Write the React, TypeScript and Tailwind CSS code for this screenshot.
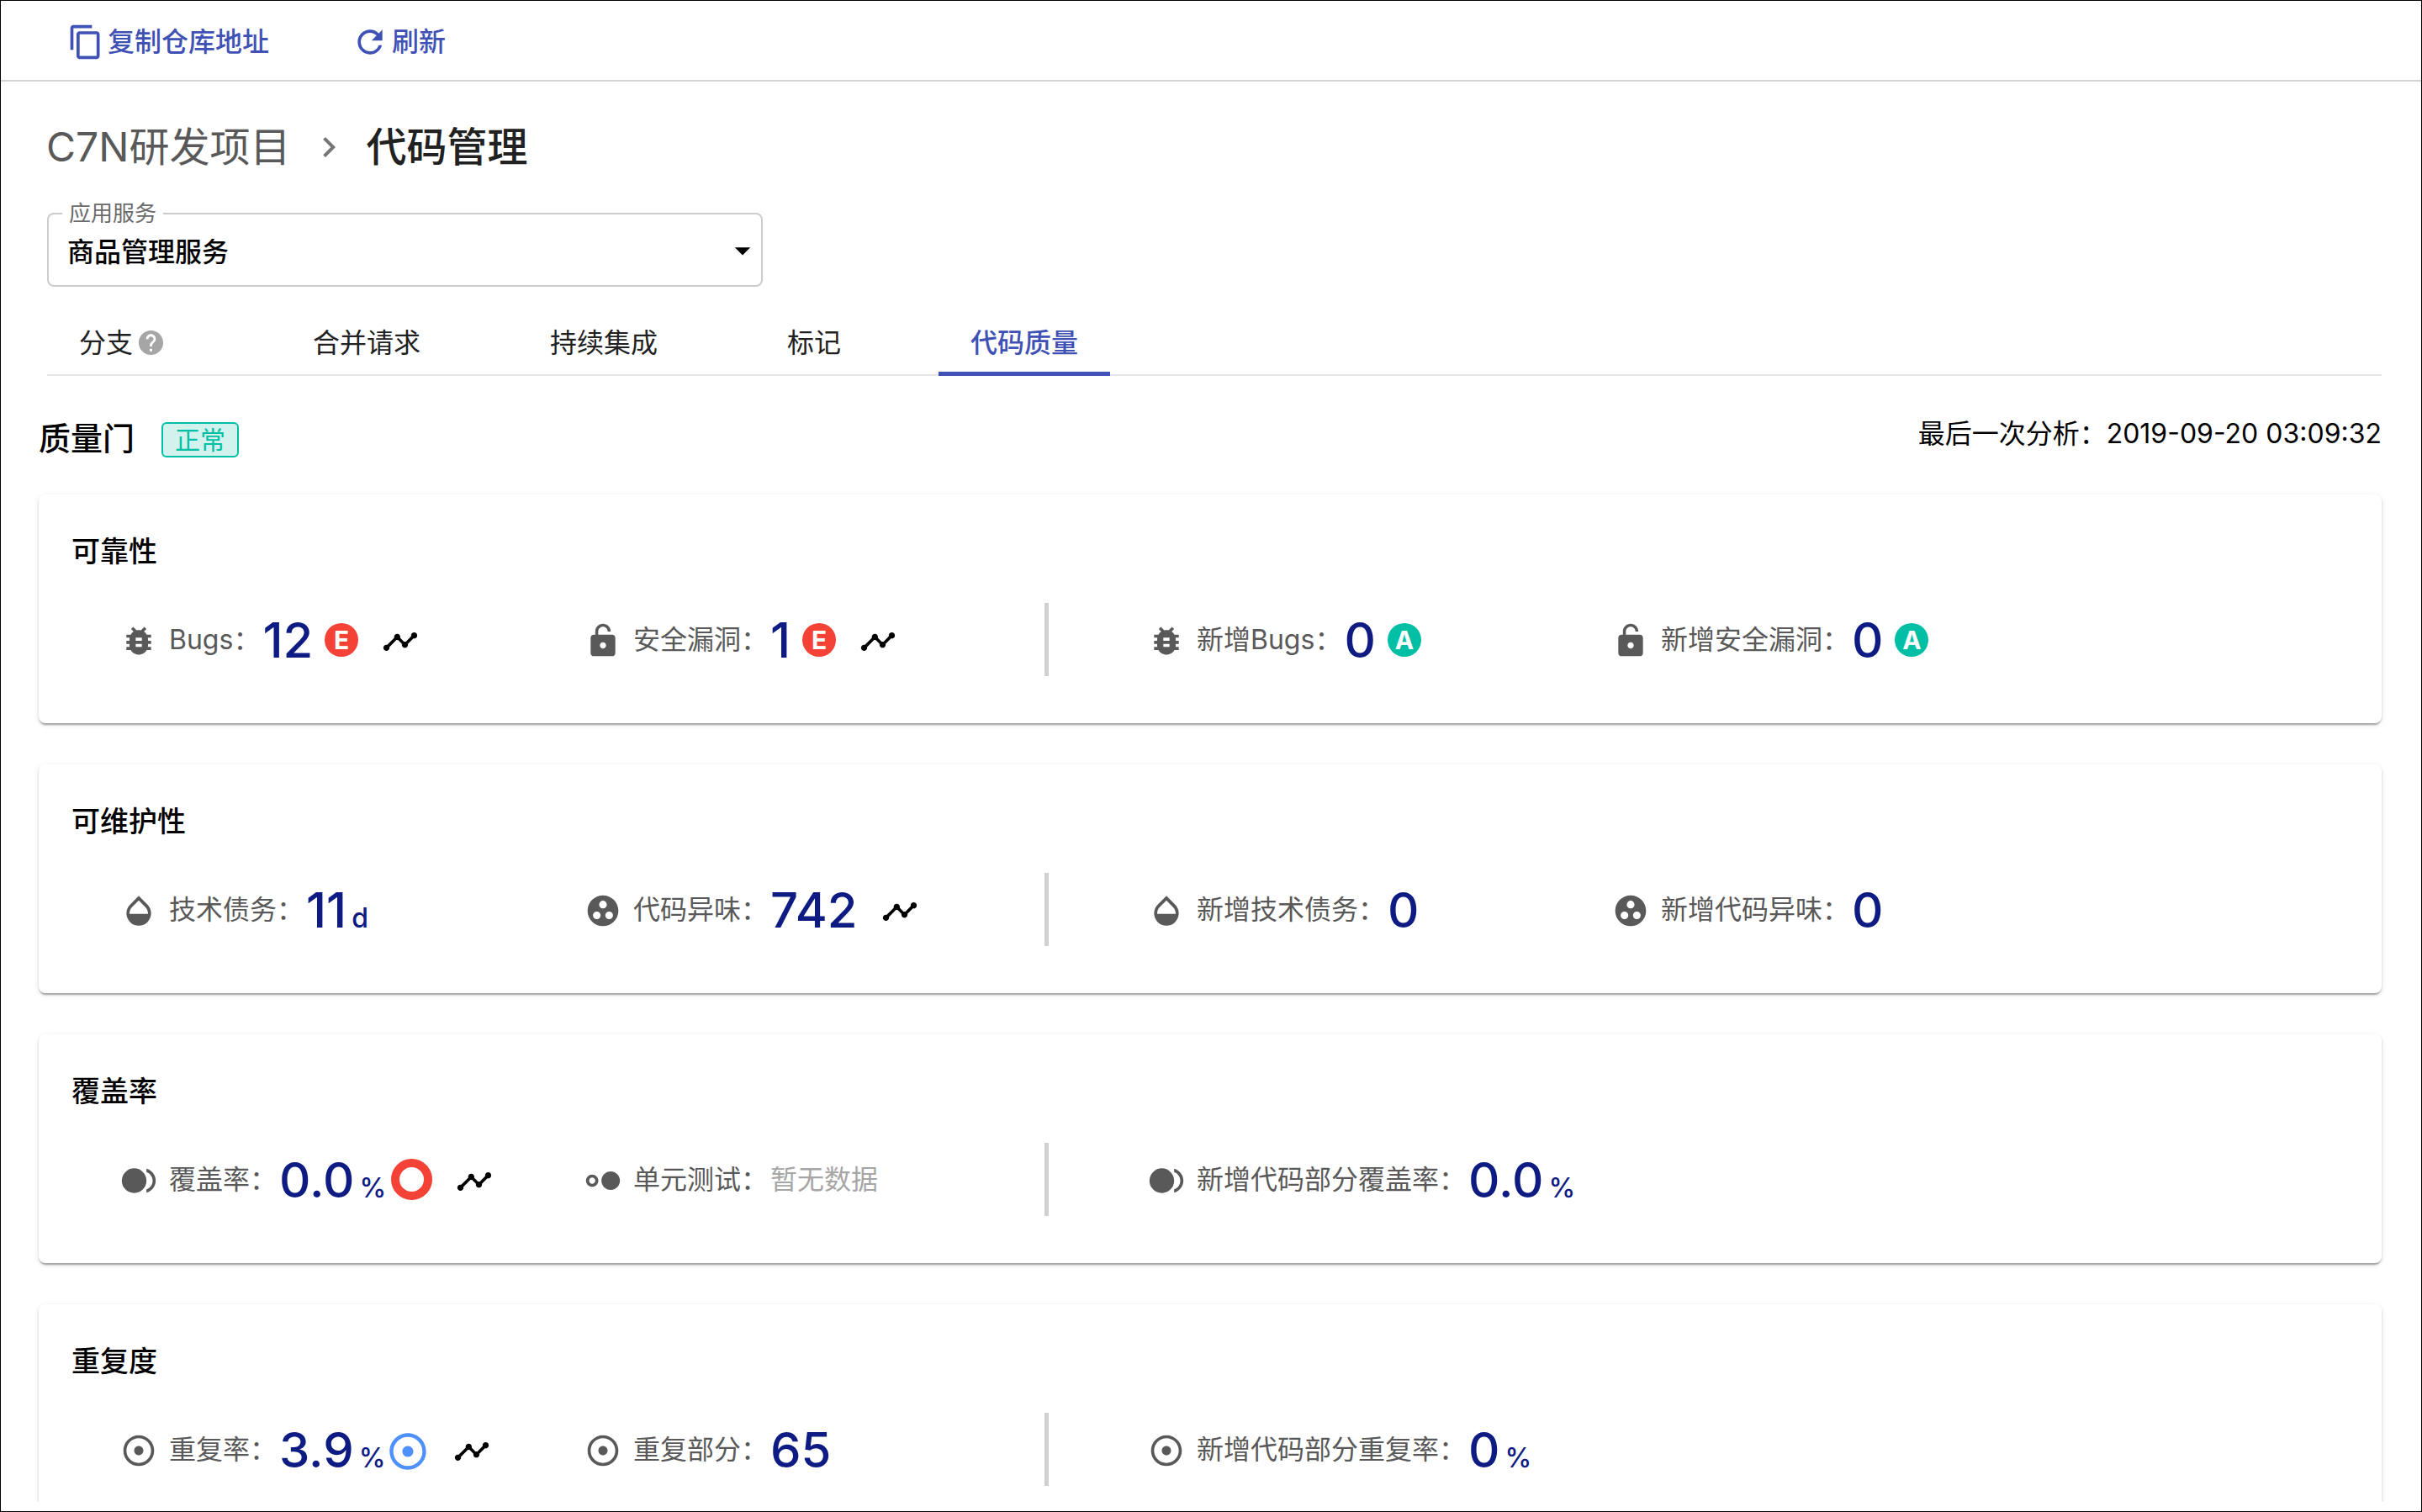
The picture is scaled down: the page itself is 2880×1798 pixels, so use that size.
import type { ReactNode } from 'react';
import {
  MdAdjust,
  MdArrowDropDown,
  MdBugReport,
  MdContentCopy,
  MdGroupWork,
  MdHdrStrong,
  MdHelp,
  MdKeyboardArrowRight,
  MdOpacity,
  MdRefresh,
  MdTimeline,
} from 'react-icons/md';

const ICON = 'size-11 shrink-0';

function UnlockIcon() {
  return (
    <svg viewBox="0 0 24 24" fill="currentColor" className={ICON} aria-hidden="true">
      <path d="M18 8H8.9V6c0-1.71 1.39-3.1 3.1-3.1s3.1 1.39 3.1 3.1H17c0-2.76-2.24-5-5-5S7 3.24 7 6v2H6c-1.1 0-2 .9-2 2v10c0 1.1.9 2 2 2h12c1.1 0 2-.9 2-2V10c0-1.1-.9-2-2-2zm-6 9c-1.1 0-2-.9-2-2s.9-2 2-2 2 .9 2 2-.9 2-2 2z" />
    </svg>
  );
}

function CoverageIcon() {
  return (
    <svg viewBox="0 0 24 24" fill="currentColor" className={ICON} aria-hidden="true">
      <circle cx="9" cy="12" r="8" />
      <path d="M21 12c0-2.61-1.67-4.83-4-5.65V4.26c3.45.89 6 4.01 6 7.74s-2.55 6.85-6 7.74v-2.09c2.33-.82 4-3.04 4-5.65z" />
    </svg>
  );
}

function Grade({ value }: { value: 'A' | 'E' }) {
  const color = value === 'A' ? 'bg-[#00bfa5]' : 'bg-[#f44336]';
  return (
    <span
      className={`ml-3.5 flex size-10 items-center justify-center rounded-full text-[30px] leading-none font-bold text-white ${color}`}
    >
      {value}
    </span>
  );
}

function Trend() {
  return (
    <button type="button" aria-label="趋势" className="mt-1 ml-7 text-black">
      <MdTimeline className={ICON} />
    </button>
  );
}

type MetricProps = {
  icon: ReactNode;
  label: string;
  value?: string;
  unit?: string;
  empty?: string;
  children?: ReactNode;
};

function Metric({ icon, label, value, unit, empty, children }: MetricProps) {
  return (
    <div className="flex h-[87px] w-[508px] items-center whitespace-nowrap">
      <span className="mt-0.5 text-[#595959]">{icon}</span>
      <span className="ml-3.5 text-[32px] text-[#595959]">{label}：</span>
      {value && (
        <span className="ml-[3px] flex items-baseline font-medium text-[#0d1b82]">
          <span className="text-[58px] leading-none">{value}</span>
          {unit && <span className="ml-1.5 text-[32px] leading-none">{unit}</span>}
        </span>
      )}
      {empty && <span className="ml-[3px] text-[32px] text-[#a6a6a6]">{empty}</span>}
      {children}
    </div>
  );
}

function Card({ title, total, fresh }: { title: string; total: ReactNode; fresh: ReactNode }) {
  return (
    <section className="h-[272px] shrink-0 rounded-lg bg-white shadow-[0_4px_2px_-2px_rgba(0,0,0,0.2),0_2px_2px_0_rgba(0,0,0,0.14),0_2px_6px_0_rgba(0,0,0,0.12)]">
      <h3 className="pt-[43px] pl-[39px] text-[34px] leading-[50px] font-medium text-black">{title}</h3>
      <div className="mt-9 flex items-center pl-[97px]">
        <div className="flex gap-11">{total}</div>
        <div className="ml-[39px] h-[87px] w-[5px] bg-[#d0d0d0]" />
        <div className="ml-[118px] flex gap-11">{fresh}</div>
      </div>
    </section>
  );
}

const TABS = ['分支', '合并请求', '持续集成', '标记', '代码质量'];

export default function App() {
  return (
    <div className="flex h-screen flex-col overflow-hidden border border-black bg-white font-['Inter','Noto_Sans_CJK_SC',sans-serif] text-black">
      <header className="flex h-24 shrink-0 items-center border-b-2 border-[#d3d3d3] pt-1 pl-[79px] text-[32px] font-medium text-[#3f51b5]">
        <button type="button" className="flex items-center gap-1">
          <MdContentCopy className={ICON} />
          复制仓库地址
        </button>
        <button type="button" className="ml-[98px] flex items-center gap-1">
          <MdRefresh className={ICON} />
          刷新
        </button>
      </header>

      <nav aria-label="面包屑" className="mt-11 ml-[54px] flex h-[68px] shrink-0 items-center text-[48px]">
        <a href="#project" className="text-[#595959]">C7N研发项目</a>
        <MdKeyboardArrowRight className="mr-5 ml-[22px] size-12 text-[#757575]" />
        <h1 className="font-medium text-[#212121]">代码管理</h1>
      </nav>

      <fieldset className="mt-[27px] ml-[55px] flex h-[105px] w-[851px] shrink-0 flex-col rounded-lg border-2 border-[#ccc]">
        <legend className="ml-4 px-2 text-[26px] leading-9 text-[#6b6b6b]">
          <label htmlFor="service">应用服务</label>
        </legend>
        <div className="relative grow">
          <select id="service" className="h-full w-full appearance-none bg-transparent pt-1 pl-[22px] text-[32px] font-medium text-black">
            <option>商品管理服务</option>
          </select>
          <MdArrowDropDown className="pointer-events-none absolute top-1 right-0 size-11" />
        </div>
      </fieldset>

      <div role="tablist" className="mr-[47px] ml-[55px] flex h-[106px] shrink-0 items-end gap-[78px] border-b-2 border-[#e6e6e6] text-[32px] text-[#212121]">
        {TABS.map((tab) => {
          const active = tab === '代码质量';
          return (
            <button
              key={tab}
              type="button"
              role="tab"
              aria-selected={active}
              className={
                active
                  ? '-mb-0.5 flex h-[74px] items-center border-b-[5px] border-[#3f51b5] px-[38px] font-medium text-[#3f51b5]'
                  : '-mb-0.5 flex h-[74px] items-center border-b-[5px] border-transparent px-[38px]'
              }
            >
              {tab}
              {tab === '分支' && <MdHelp className="mr-[21px] ml-1 size-[35px] text-[#a6a6a6]" />}
            </button>
          );
        })}
      </div>

      <main className="mb-[11px] flex min-h-0 grow flex-col overflow-hidden pr-[47px] pl-[45px]">
        <div className="mt-[43px] flex h-[62px] shrink-0 items-center">
          <h2 className="text-[38px] font-medium">质量门</h2>
          <span className="mt-1 ml-8 flex h-[42px] items-center rounded-md border-2 border-[#00bfa5] bg-[#d1f2ed] px-3.5 text-[30px] text-[#00bfa5]">
            正常
          </span>
          <p className="mb-2.5 ml-auto text-[32px]">最后一次分析：2019-09-20 03:09:32</p>
        </div>

        <div className="mt-9 flex flex-col gap-[49px]">
          <Card
            title="可靠性"
            total={
              <>
                <Metric icon={<MdBugReport className={ICON} />} label="Bugs" value="12">
                  <Grade value="E" />
                  <Trend />
                </Metric>
                <Metric icon={<UnlockIcon />} label="安全漏洞" value="1">
                  <Grade value="E" />
                  <Trend />
                </Metric>
              </>
            }
            fresh={
              <>
                <Metric icon={<MdBugReport className={ICON} />} label="新增Bugs" value="0">
                  <Grade value="A" />
                </Metric>
                <Metric icon={<UnlockIcon />} label="新增安全漏洞" value="0">
                  <Grade value="A" />
                </Metric>
              </>
            }
          />
          <Card
            title="可维护性"
            total={
              <>
                <Metric icon={<MdOpacity className={ICON} />} label="技术债务" value="11" unit="d" />
                <Metric icon={<MdGroupWork className={ICON} />} label="代码异味" value="742">
                  <Trend />
                </Metric>
              </>
            }
            fresh={
              <>
                <Metric icon={<MdOpacity className={ICON} />} label="新增技术债务" value="0" />
                <Metric icon={<MdGroupWork className={ICON} />} label="新增代码异味" value="0" />
              </>
            }
          />
          <Card
            title="覆盖率"
            total={
              <>
                <Metric icon={<CoverageIcon />} label="覆盖率" value="0.0" unit="%">
                  <span className="ml-1.5 size-[49px] rounded-full border-[10px] border-[#f44336]" />
                  <Trend />
                </Metric>
                <Metric icon={<MdHdrStrong className={ICON} />} label="单元测试" empty="暂无数据" />
              </>
            }
            fresh={<Metric icon={<CoverageIcon />} label="新增代码部分覆盖率" value="0.0" unit="%" />}
          />
          <Card
            title="重复度"
            total={
              <>
                <Metric icon={<MdAdjust className={ICON} />} label="重复率" value="3.9" unit="%">
                  <MdAdjust className="mt-1 size-[52px] text-[#4d90fe]" />
                  <Trend />
                </Metric>
                <Metric icon={<MdAdjust className={ICON} />} label="重复部分" value="65" />
              </>
            }
            fresh={<Metric icon={<MdAdjust className={ICON} />} label="新增代码部分重复率" value="0" unit="%" />}
          />
        </div>
      </main>
    </div>
  );
}
